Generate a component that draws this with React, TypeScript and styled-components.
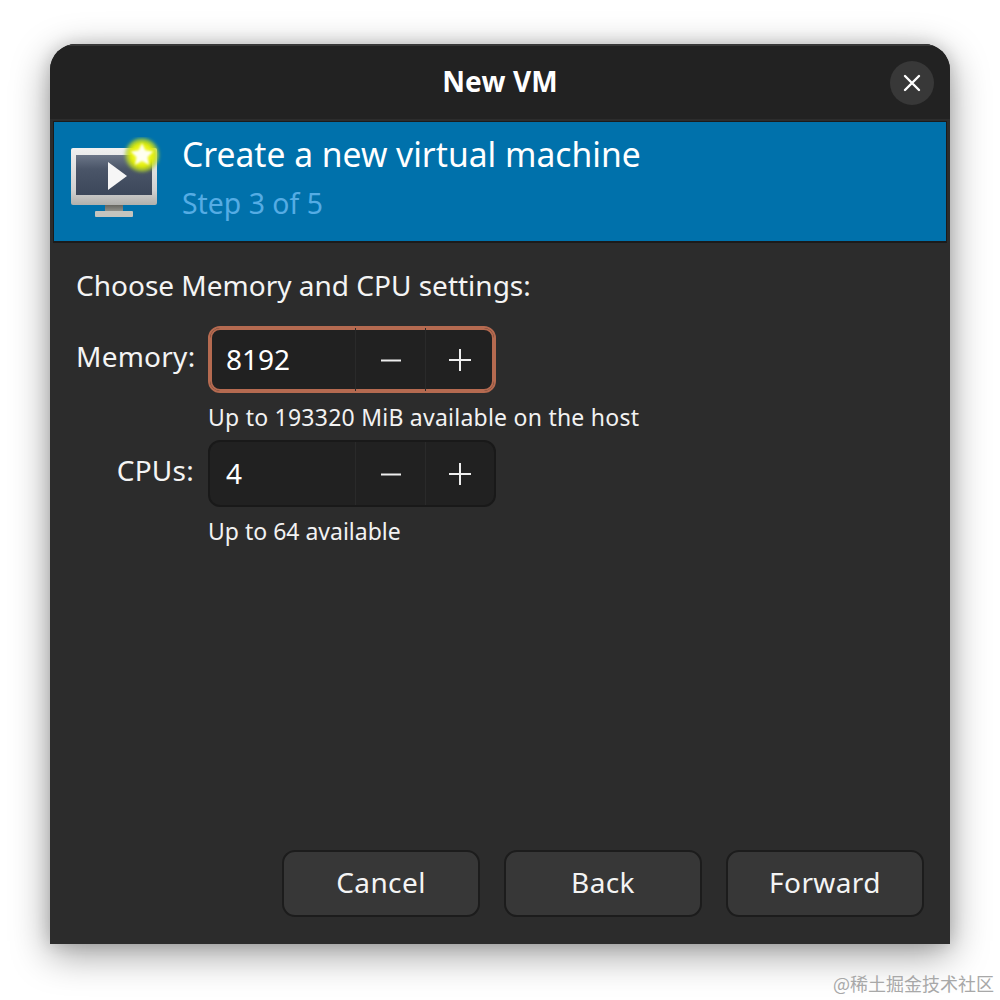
import React from "react";
import styled, { createGlobalStyle } from "styled-components";

const Global = createGlobalStyle`
  html, body { margin: 0; padding: 0; background: #ffffff; }
  body { font-family: "Noto Sans", "Open Sans", sans-serif; }
`;

const Page = styled.div`
  position: relative;
  width: 1000px;
  height: 1000px;
  box-sizing: border-box;
  padding: 44px 50px 56px;
  overflow: hidden;
`;

const Window = styled.div`
  width: 900px;
  height: 900px;
  display: flex;
  flex-direction: column;
  background: #2c2c2c;
  border-radius: 26px 26px 0 0;
  box-shadow: 0 10px 38px rgba(0, 0, 0, 0.4), 0 0 16px rgba(0, 0, 0, 0.14);
  overflow: hidden;
`;

const TitleBar = styled.div`
  position: relative;
  flex: none;
  height: 75px;
  padding-bottom: 4px;
  display: flex;
  align-items: center;
  justify-content: center;
  background: #222222;
  border-top: 2px solid #383838;
  box-sizing: border-box;
`;

const Title = styled.div`
  color: #ffffff;
  font-size: 28px;
  font-weight: 700;
  letter-spacing: 0.15px;
`;

const CloseButton = styled.button`
  position: absolute;
  right: 16px;
  top: 15px;
  width: 44px;
  height: 44px;
  padding: 0;
  border: none;
  border-radius: 50%;
  background: #383838;
  display: flex;
  align-items: center;
  justify-content: center;
`;

const Banner = styled.div`
  flex: none;
  height: 122px;
  box-sizing: border-box;
  margin: 2px 3px 0 3px;
  padding: 0 0 0 16px;
  display: flex;
  align-items: center;
  gap: 16px;
  background: #0071ab;
  border: 1px solid #1b1b1b;
  border-width: 1px 1px 2px 1px;
`;

const IconSvg = styled.svg`
  flex: none;
  margin-top: -5px;
`;

const BannerText = styled.div`
  display: flex;
  flex-direction: column;
  gap: 10px;
  margin-top: -10px;
`;

const BannerTitle = styled.div`
  color: #ffffff;
  font-size: 33.65px;
  line-height: 42px;
`;

const BannerStep = styled.div`
  color: #55ace4;
  font-size: 28.4px;
  line-height: 36px;
`;

const Content = styled.div`
  flex: 1;
  min-height: 0;
  display: flex;
  flex-direction: column;
  padding: 24px 26px 27px 26px;
`;

const Heading = styled.div`
  color: #f4f4f4;
  font-size: 28px;
  line-height: 36px;
  margin-bottom: 23px;
`;

const FormGrid = styled.div`
  display: grid;
  grid-template-columns: 118px 288px;
  column-gap: 14px;
  justify-content: start;
`;

const FieldLabel = styled.div`
  color: #f4f4f4;
  font-size: 28px;
  line-height: 36px;
  text-align: right;
  letter-spacing: 0.25px;
  margin-top: 12px;
`;

const Spin = styled.div<{ $focused?: boolean }>`
  height: 67px;
  box-sizing: border-box;
  display: grid;
  grid-template-columns: 145px 70px 1fr;
  background: #212121;
  border-radius: 12px;
  border: 2px solid ${(p) => (p.$focused ? "#b56a50" : "#191919")};
  box-shadow: ${(p) => (p.$focused ? "inset 0 0 0 2px #b56a50" : "none")};
`;

const SpinValue = styled.div`
  display: flex;
  align-items: center;
  padding: 0 0 2px 16px;
  color: #ffffff;
  font-size: 28px;
`;

const SpinButton = styled.div`
  border-left: 1px solid #2a2a2a;
  display: flex;
  align-items: center;
  justify-content: center;
`;

const Hint = styled.div<{ $spacing: number }>`
  grid-column: 2;
  color: #f2f2f2;
  font-size: 23px;
  line-height: 30px;
  white-space: nowrap;
  letter-spacing: ${(p) => p.$spacing}px;
  padding: 9px 0 8px;
`;

const Footer = styled.div`
  margin-top: auto;
  display: flex;
  justify-content: flex-end;
  gap: 24px;
`;

const Button = styled.button`
  width: 198px;
  height: 67px;
  box-sizing: border-box;
  background: #373737;
  border: 2px solid #1c1c1c;
  border-radius: 13px;
  color: #f4f4f4;
  font-family: inherit;
  font-size: 28px;
  letter-spacing: 0.4px;
  padding: 0 0 3px;
`;

const Watermark = styled.div`
  position: absolute;
  right: 6px;
  top: 971px;
  color: #a8a8a8;
  font-family: "Noto Sans CJK SC", sans-serif;
  font-size: 18px;
  line-height: 24px;
  white-space: nowrap;
`;

const Minus = () => (
  <svg width="24" height="24" viewBox="0 0 24 24">
    <path d="M2 12.5H22" stroke="#eeeeee" strokeWidth="2" />
  </svg>
);

const Plus = () => (
  <svg width="24" height="24" viewBox="0 0 24 24">
    <path d="M1 12H23M12 1V23" stroke="#eeeeee" strokeWidth="2" />
  </svg>
);

const VmIcon = () => (
  <IconSvg width="96" height="84" viewBox="-1 0 96 84">
    <defs>
      <linearGradient id="screen" x1="0" y1="0" x2="0" y2="1">
        <stop offset="0" stopColor="#6c7688" />
        <stop offset="0.35" stopColor="#4a5568" />
        <stop offset="1" stopColor="#3c475a" />
      </linearGradient>
      <linearGradient id="frame" x1="0" y1="0" x2="0" y2="1">
        <stop offset="0" stopColor="#f0f0f0" />
        <stop offset="0.75" stopColor="#d0d0d0" />
        <stop offset="1" stopColor="#b0b0ac" />
      </linearGradient>
      <radialGradient id="glow">
        <stop offset="0" stopColor="#ffff80" />
        <stop offset="0.6" stopColor="#e4f000" />
        <stop offset="0.85" stopColor="#b4d428" stopOpacity="0.7" />
        <stop offset="1" stopColor="#70b040" stopOpacity="0" />
      </radialGradient>
      <linearGradient id="stand" x1="0" y1="0" x2="0" y2="1">
        <stop offset="0" stopColor="#666660" />
        <stop offset="1" stopColor="#96968f" />
      </linearGradient>
      <filter id="soft" x="-30%" y="-30%" width="160%" height="160%">
        <feGaussianBlur stdDeviation="0.8" />
      </filter>
      <filter id="softer" x="-30%" y="-30%" width="160%" height="160%">
        <feGaussianBlur stdDeviation="1.4" />
      </filter>
    </defs>
    <rect x="34" y="68" width="18" height="7" fill="url(#stand)" />
    <rect x="24" y="74" width="38" height="6" rx="1" fill="#c4c4be" />
    <rect x="0" y="11" width="86" height="57" rx="2" fill="url(#frame)" />
    <rect x="5" y="18" width="76" height="40" fill="url(#screen)" />
    <path d="M37 25L56 39L37 53Z" fill="#f6f6f6" />
    <circle cx="71" cy="18" r="18.5" fill="url(#glow)" filter="url(#softer)" />
    <path
      filter="url(#soft)"
      d="M71 6L74.2 13.6L82.5 14.4L76.3 19.9L78.1 28L71 23.8L63.9 28L65.7 19.9L59.5 14.4L67.8 13.6Z"
      fill="#fffff0"
    />
  </IconSvg>
);

export default function App() {
  return (
    <Page>
      <Global />
      <Window>
        <TitleBar>
          <Title>New VM</Title>
          <CloseButton aria-label="Close">
            <svg width="18" height="18" viewBox="0 0 18 18">
              <path d="M2 2L16 16M16 2L2 16" stroke="#ffffff" strokeWidth="2.4" strokeLinecap="round" />
            </svg>
          </CloseButton>
        </TitleBar>
        <Banner>
          <VmIcon />
          <BannerText>
            <BannerTitle>Create a new virtual machine</BannerTitle>
            <BannerStep>Step 3 of 5</BannerStep>
          </BannerText>
        </Banner>
        <Content>
          <Heading>Choose Memory and CPU settings:</Heading>
          <FormGrid>
            <FieldLabel>Memory:</FieldLabel>
            <Spin $focused>
              <SpinValue>8192</SpinValue>
              <SpinButton><Minus /></SpinButton>
              <SpinButton><Plus /></SpinButton>
            </Spin>
            <Hint $spacing={0.24}>Up to 193320 MiB available on the host</Hint>
            <FieldLabel>CPUs:</FieldLabel>
            <Spin>
              <SpinValue>4</SpinValue>
              <SpinButton><Minus /></SpinButton>
              <SpinButton><Plus /></SpinButton>
            </Spin>
            <Hint $spacing={0}>Up to 64 available</Hint>
          </FormGrid>
          <Footer>
            <Button>Cancel</Button>
            <Button>Back</Button>
            <Button>Forward</Button>
          </Footer>
        </Content>
      </Window>
      <Watermark>@稀土掘金技术社区</Watermark>
    </Page>
  );
}
